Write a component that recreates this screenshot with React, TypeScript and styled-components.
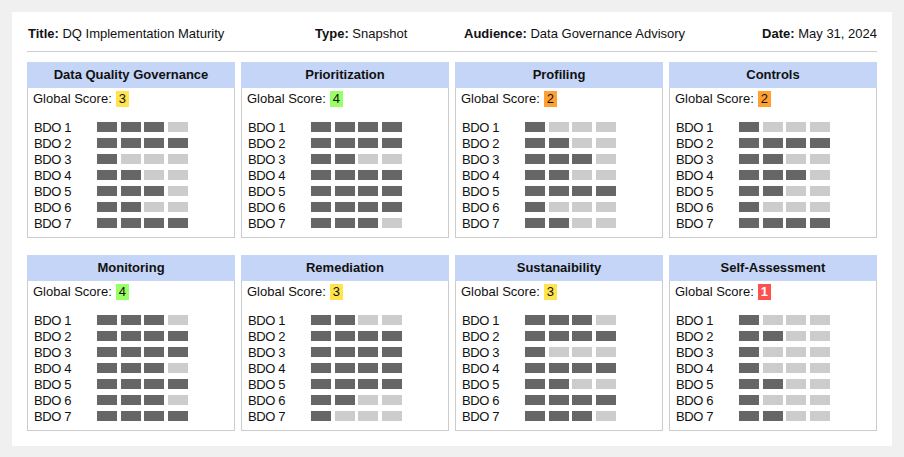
import React from "react";
import styled, { createGlobalStyle } from "styled-components";

const Global = createGlobalStyle`
  body { margin: 0; background: #f0f0f0; font-family: "Liberation Sans", Arial, sans-serif; color: #111; }
`;

const Page = styled.div`
  padding: 12px;
  width: 904px;
  box-sizing: border-box;
`;
const Panel = styled.div`
  background: #fff;
  width: 880px;
  box-sizing: border-box;
  padding: 12px 15px 15px 15px;
`;
const HeaderRow = styled.div`
  display: flex;
  font-size: 13px;
  height: 28px;
  align-items: flex-start;
  padding: 2px 0 0 1px;
  box-sizing: border-box;
  border-bottom: 1px solid #ccc;
  margin-bottom: 10px;
`;
const HItem = styled.div<{ $w?: number }>`
  width: ${p => (p.$w ? `${p.$w}px` : "auto")};
  margin-left: ${p => (p.$w ? "0" : "auto")};
  b { font-weight: 700; }
`;
const Grid = styled.div`
  display: grid;
  grid-template-columns: repeat(4, 208px);
  column-gap: 6px;
  row-gap: 17px;
`;
const Card = styled.div`
  border: 1px solid #ccc;
  border-top: none;
  padding-bottom: 6px;
`;
const CardHead = styled.div`
  background: #c5d5f7;
  height: 26px;
  line-height: 26px;
  text-align: center;
  font-weight: 700;
  font-size: 13px;
  margin: 0 -1px;
`;
const Score = styled.div`
  font-size: 13px;
  padding: 2px 0 0 5px;
  height: 17px;
  display: flex;
  align-items: center;
  gap: 4px;
  margin-bottom: 12px;
`;
const Badge = styled.span<{ $c: string }>`
  background: ${p => p.$c};
  padding: 0 3px;
  line-height: 16px;
  color: ${p => (p.$c === "#ff5050" ? "#fff" : "#111")};
  font-weight: ${p => (p.$c === "#ff5050" ? 700 : 400)};
`;
const Row = styled.div`
  display: flex;
  align-items: center;
  height: 16px;
  padding-left: 6px;
  font-size: 13px;
`;
const Label = styled.span`
  width: 63px;
  letter-spacing: -0.4px;
`;
const Bars = styled.div`
  display: flex;
  gap: 3.5px;
`;
const Bar = styled.span<{ $on: boolean }>`
  width: 20px;
  height: 10px;
  background: ${p => (p.$on ? "#666" : "#ccc")};
`;

const colors: Record<number, string> = { 1: "#ff5050", 2: "#ffa033", 3: "#ffe44d", 4: "#99ff66" };
const cards: { t: string; s: number; v: number[] }[] = [
  { t: "Data Quality Governance", s: 3, v: [3, 4, 1, 2, 3, 2, 4] },
  { t: "Prioritization", s: 4, v: [4, 4, 2, 4, 4, 4, 3] },
  { t: "Profiling", s: 2, v: [1, 2, 3, 2, 4, 1, 2] },
  { t: "Controls", s: 2, v: [1, 4, 2, 3, 2, 1, 4] },
  { t: "Monitoring", s: 4, v: [3, 4, 4, 3, 4, 3, 4] },
  { t: "Remediation", s: 3, v: [2, 4, 4, 4, 4, 2, 1] },
  { t: "Sustanaibility", s: 3, v: [3, 4, 1, 4, 2, 4, 3] },
  { t: "Self-Assessment", s: 1, v: [1, 2, 1, 1, 2, 1, 2] },
];

export default function App() {
  return (
    <Page>
      <Global />
      <Panel>
        <HeaderRow>
          <HItem $w={287}><b>Title:</b> DQ Implementation Maturity</HItem>
          <HItem $w={149}><b>Type:</b> Snapshot</HItem>
          <HItem $w={240}><b>Audience:</b> Data Governance Advisory</HItem>
          <HItem><b>Date:</b> May 31, 2024</HItem>
        </HeaderRow>
        <Grid>
          {cards.map(c => (
            <Card key={c.t}>
              <CardHead>{c.t}</CardHead>
              <Score>Global Score: <Badge $c={colors[c.s]}>{c.s}</Badge></Score>
              {c.v.map((n, i) => (
                <Row key={i}>
                  <Label>BDO {i + 1}</Label>
                  <Bars>
                    {[0, 1, 2, 3].map(k => <Bar key={k} $on={k < n} />)}
                  </Bars>
                </Row>
              ))}
            </Card>
          ))}
        </Grid>
      </Panel>
    </Page>
  );
}
